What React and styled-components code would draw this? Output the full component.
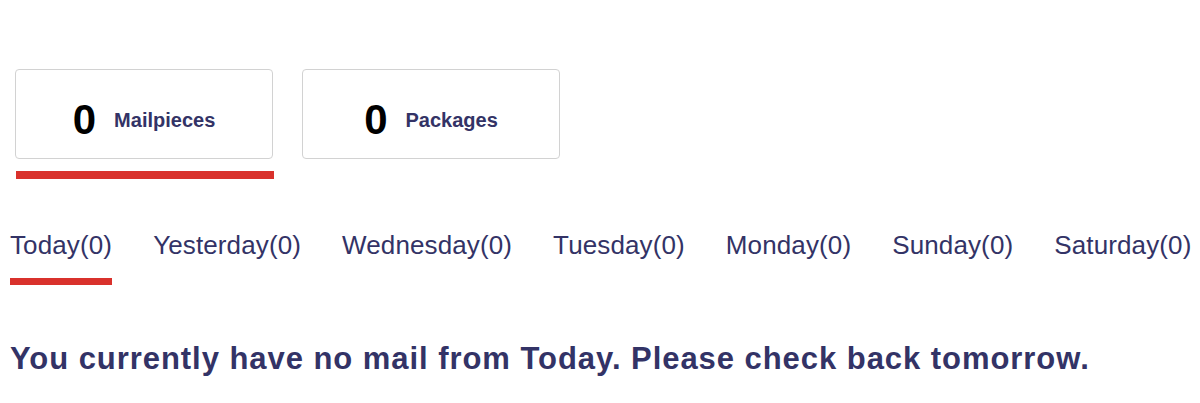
import React, { useState } from "react";
import styled, { createGlobalStyle } from "styled-components";

const GlobalStyle = createGlobalStyle`
    body {
        margin: 0;
        background: #ffffff;
        font-family: "Liberation Sans", Arial, sans-serif;
    }
`;

const Page = styled.div`
    padding-top: 69px;
`;

const CountRow = styled.div`
    display: flex;
    gap: 28px;
    padding-left: 15px;
`;

const CountTab = styled.div`
    display: flex;
    flex-direction: column;
    width: 259px;
`;

const Card = styled.div`
    box-sizing: border-box;
    width: 258px;
    height: 90px;
    border: 1.5px solid #d2d2d2;
    border-radius: 4px;
    display: flex;
    align-items: center;
    justify-content: center;
    gap: 18px;
    padding-top: 12px;
    cursor: pointer;
`;

const Count = styled.span`
    font-size: 42px;
    font-weight: 700;
    color: #000000;
    line-height: 1;
`;

const CountLabel = styled.span`
    font-size: 20px;
    font-weight: 700;
    color: #333366;
    line-height: 1;
`;

const Bar = styled.div`
    height: 8px;
    margin-top: 12px;
    margin-left: 1px;
    background: ${(p) => (p.$active ? "#d9312c" : "transparent")};
`;

const DayTabs = styled.div`
    display: flex;
    gap: 41px;
    padding-left: 10px;
    margin-top: 51px;
`;

const DayTab = styled.div`
    display: flex;
    flex-direction: column;
    cursor: pointer;
`;

const DayLabel = styled.span`
    font-size: 26px;
    letter-spacing: 0.12px;
    line-height: 30px;
    color: #333366;
    white-space: nowrap;
`;

const DayBar = styled.div`
    height: 7px;
    margin-top: 18px;
    background: ${(p) => (p.$active ? "#d9312c" : "transparent")};
`;

const Message = styled.h2`
    margin: 56px 0 0;
    padding-left: 10px;
    font-size: 31px;
    font-weight: 700;
    letter-spacing: 0.95px;
    line-height: 36px;
    color: #333366;
    white-space: nowrap;
`;

const counts = [
    { key: "mail", label: "Mailpieces", value: 0 },
    { key: "pkg", label: "Packages", value: 0 },
];

const days = ["Today", "Yesterday", "Wednesday", "Tuesday", "Monday", "Sunday", "Saturday"];

export default function App() {
    const [kind, setKind] = useState("mail");
    const [day, setDay] = useState("Today");

    return (
        <>
            <GlobalStyle />
            <Page>
                <CountRow>
                    {counts.map((c) => (
                        <CountTab key={c.key} onClick={() => setKind(c.key)}>
                            <Card>
                                <Count>{c.value}</Count>
                                <CountLabel>{c.label}</CountLabel>
                            </Card>
                            <Bar $active={kind === c.key} />
                        </CountTab>
                    ))}
                </CountRow>
                <DayTabs>
                    {days.map((d) => (
                        <DayTab key={d} onClick={() => setDay(d)}>
                            <DayLabel>{d}(0)</DayLabel>
                            <DayBar $active={day === d} />
                        </DayTab>
                    ))}
                </DayTabs>
                <Message>
                    You currently have no mail from {day}. Please check back tomorrow.
                </Message>
            </Page>
        </>
    );
}
